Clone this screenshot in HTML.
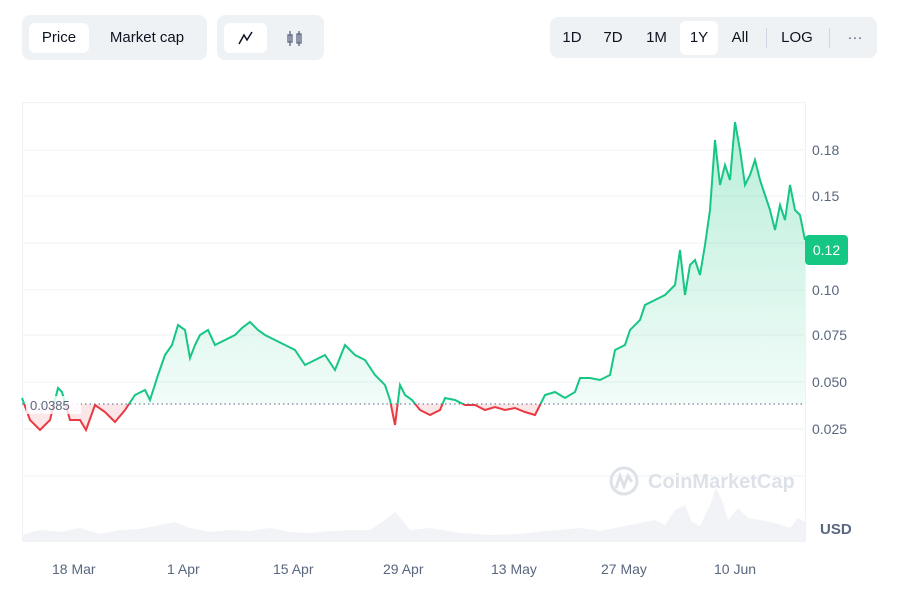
<!DOCTYPE html>
<html><head><style>
body{margin:0;width:900px;height:595px;background:#fff;font-family:"Liberation Sans",sans-serif;position:relative;overflow:hidden}
.grp{position:absolute;background:#eff2f5;border-radius:8px}
.btn{position:absolute;font-size:15px;color:#0d1421;line-height:30px;text-align:center;border-radius:6px}
.on{background:#fff}
.sep{position:absolute;width:1px;height:20px;background:#cfd6e4;top:28px}
.ax{position:absolute;font-size:14px;color:#58667e}
</style></head><body>
<div class="grp" style="left:22px;top:15px;width:185px;height:45px"></div>
<div class="btn on" style="left:29px;top:23px;width:60px">Price</div>
<div class="btn" style="left:96px;top:23px;width:102px">Market cap</div>
<div class="grp" style="left:217px;top:15px;width:107px;height:45px"></div>
<div class="btn on" style="left:224px;top:23px;width:43px;height:30px"></div>
<svg style="position:absolute;left:224px;top:23px" width="100" height="30"><path d="M15 21 L20 12 L23 17 L28 9" fill="none" stroke="#0d1421" stroke-width="1.5"/><g stroke="#58667e" stroke-width="1.3" fill="none"><line x1="66" y1="8" x2="66" y2="23"/><rect x="64" y="12" width="4" height="7"/><line x1="75" y1="8" x2="75" y2="23"/><rect x="73" y="11" width="4" height="9"/></g></svg>
<div class="grp" style="left:550px;top:17px;width:327px;height:41px"></div>
<div class="btn" style="left:557px;top:23px;width:30px">1D</div>
<div class="btn" style="left:598px;top:23px;width:30px">7D</div>
<div class="btn" style="left:640px;top:23px;width:33px">1M</div>
<div class="btn on" style="left:680px;top:21px;width:38px;height:34px;line-height:34px">1Y</div>
<div class="btn" style="left:724px;top:23px;width:32px">All</div>
<div class="sep" style="left:766px"></div>
<div class="btn" style="left:777px;top:23px;width:40px">LOG</div>
<div class="sep" style="left:829px"></div>
<div class="btn" style="left:840px;top:23px;width:30px;color:#58667e">···</div>

<svg style="position:absolute;left:0;top:0" width="900" height="595">
<defs>
<linearGradient id="g" x1="0" y1="0" x2="0" y2="1"><stop offset="0" stop-color="#16c784" stop-opacity=".3"/><stop offset="1" stop-color="#16c784" stop-opacity=".03"/></linearGradient>
<clipPath id="up"><rect x="0" y="0" width="900" height="404"/></clipPath>
<clipPath id="dn"><rect x="0" y="404" width="900" height="200"/></clipPath>
<path id="p" fill="none" d="M22 398 L30 420 40 430 50 420 58 388 62 392 70 420 80 420 86 430 95 405 105 412 115 422 125 410 135 395 145 390 150 400 158 375 165 355 172 345 178 325 185 330 190 358 195 345 200 335 208 330 215 345 225 340 235 335 242 328 250 322 258 330 265 335 275 340 285 345 295 350 305 365 315 360 325 355 335 370 345 345 355 355 365 360 375 375 385 385 390 400 395 425 400 385 405 395 412 400 420 410 430 415 440 410 445 398 455 400 465 405 475 405 485 410 495 407 505 410 515 408 525 412 535 415 540 405 545 395 555 392 565 398 575 392 580 378 590 378 600 380 610 375 615 350 625 345 630 330 640 320 645 305 655 300 665 295 675 285 680 250 685 295 690 265 695 260 700 275 705 245 710 210 715 140 720 185 725 165 730 180 735 122 740 150 745 185 750 175 755 160 760 180 765 195 770 210 775 230 780 205 785 220 790 185 795 210 800 215 805 240"/>
</defs>
<rect x="22.5" y="102.5" width="783" height="439" fill="none" stroke="#eff2f5"/>
<g stroke="#eff2f5"><line x1="22" y1="150" x2="805" y2="150"/><line x1="22" y1="196" x2="805" y2="196"/><line x1="22" y1="243" x2="805" y2="243"/><line x1="22" y1="290" x2="805" y2="290"/><line x1="22" y1="335" x2="805" y2="335"/><line x1="22" y1="382" x2="805" y2="382"/><line x1="22" y1="429" x2="805" y2="429"/><line x1="22" y1="476" x2="805" y2="476"/></g>
<path d="M22 541 L22 535 40 530 60 532 80 528 100 534 120 530 140 529 160 525 175 522 190 528 210 532 230 530 250 531 270 528 290 532 310 533 330 531 350 530 370 530 385 520 395 512 402 520 410 530 430 528 460 533 490 535 520 534 545 531 560 530 580 528 600 531 620 527 640 523 655 520 665 525 675 510 685 505 692 522 700 526 710 505 716 488 722 500 728 520 738 508 748 518 760 520 775 523 790 528 798 518 805 522 L805 541Z" fill="#f1f3f6"/>
<text x="648" y="488" font-family="Liberation Sans,sans-serif" font-size="20" font-weight="bold" fill="#dde1e8">CoinMarketCap</text>
<circle cx="624" cy="481" r="13" fill="none" stroke="#dde1e8" stroke-width="3"/>
<path d="M616 488 L620 476 L624 486 L628 476 L632 482" fill="none" stroke="#dde1e8" stroke-width="3"/>
<path d="M22 398 L30 420 40 430 50 420 58 388 62 392 70 420 80 420 86 430 95 405 105 412 115 422 125 410 135 395 145 390 150 400 158 375 165 355 172 345 178 325 185 330 190 358 195 345 200 335 208 330 215 345 225 340 235 335 242 328 250 322 258 330 265 335 275 340 285 345 295 350 305 365 315 360 325 355 335 370 345 345 355 355 365 360 375 375 385 385 390 400 395 425 400 385 405 395 412 400 420 410 430 415 440 410 445 398 455 400 465 405 475 405 485 410 495 407 505 410 515 408 525 412 535 415 540 405 545 395 555 392 565 398 575 392 580 378 590 378 600 380 610 375 615 350 625 345 630 330 640 320 645 305 655 300 665 295 675 285 680 250 685 295 690 265 695 260 700 275 705 245 710 210 715 140 720 185 725 165 730 180 735 122 740 150 745 185 750 175 755 160 760 180 765 195 770 210 775 230 780 205 785 220 790 185 795 210 800 215 805 240 L805 404 L22 404Z" fill="url(#g)" clip-path="url(#up)"/>
<path d="M22 398 L30 420 40 430 50 420 58 388 62 392 70 420 80 420 86 430 95 405 105 412 115 422 125 410 135 395 145 390 L145 404 L22 404Z M385 404 L390 400 395 425 400 385 405 395 412 400 420 410 430 415 440 410 445 398 455 400 465 405 475 405 485 410 495 407 505 410 515 408 525 412 535 415 540 405 L540 404Z" fill="#ea3943" fill-opacity=".12" clip-path="url(#dn)"/>
<use href="#p" stroke="#16c784" stroke-width="2" clip-path="url(#up)"/>
<use href="#p" stroke="#ea3943" stroke-width="2" clip-path="url(#dn)"/>
<line x1="22" y1="404" x2="805" y2="404" stroke="#58667e" stroke-dasharray="1.5 3"/>
<rect x="26" y="396" width="55" height="18" fill="#fff" opacity=".8"/>
<text x="30" y="410" font-size="13" fill="#58667e" font-family="Liberation Sans,sans-serif">0.0385</text>
</svg>
<div class="ax" style="left:812px;top:142px">0.18</div>
<div class="ax" style="left:812px;top:188px">0.15</div>
<div style="position:absolute;left:805px;top:235px;width:43px;height:30px;background:#16c784;border-radius:4px;color:#fff;font-size:14px;line-height:30px;text-align:center">0.12</div>
<div class="ax" style="left:812px;top:282px">0.10</div>
<div class="ax" style="left:812px;top:327px">0.075</div>
<div class="ax" style="left:812px;top:374px">0.050</div>
<div class="ax" style="left:812px;top:421px">0.025</div>
<div class="ax" style="left:820px;top:521px;font-weight:bold;font-size:15px">USD</div>
<div class="ax" style="left:52px;top:561px">18 Mar</div>
<div class="ax" style="left:167px;top:561px">1 Apr</div>
<div class="ax" style="left:273px;top:561px">15 Apr</div>
<div class="ax" style="left:383px;top:561px">29 Apr</div>
<div class="ax" style="left:491px;top:561px">13 May</div>
<div class="ax" style="left:601px;top:561px">27 May</div>
<div class="ax" style="left:714px;top:561px">10 Jun</div>
</body></html>
